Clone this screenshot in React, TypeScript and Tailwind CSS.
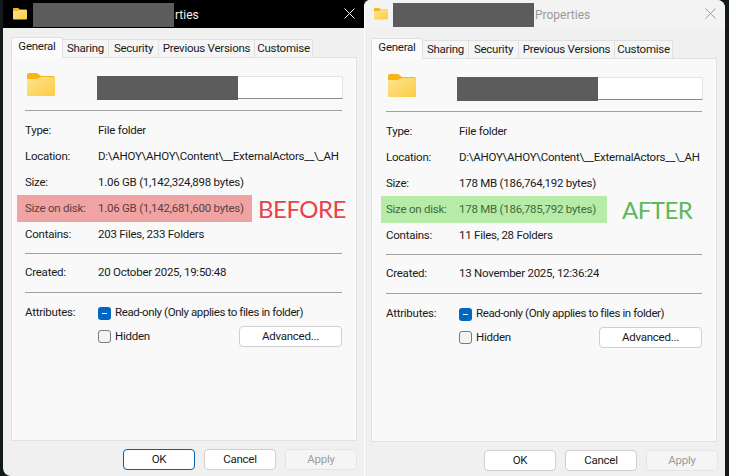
import type { ReactNode } from 'react'

const font = "font-['Roboto',sans-serif]"

function FolderIcon({ size }: { size: number }) {
  const id = `fold${size}`
  return (
    <svg width={size} height={size * 0.83} viewBox="0 0 28 23" className="shrink-0">
      <defs>
        <linearGradient id={id} x1="0" y1="0" x2="1" y2="1">
          <stop offset="0" stopColor="#fde58f" />
          <stop offset="1" stopColor="#fccb45" />
        </linearGradient>
      </defs>
      <path d="M0 2a2 2 0 0 1 2-2h8l4 3h12a2 2 0 0 1 2 2v2H0z" fill="#f7b519" />
      <path d="M0 6l10 0 4-2h12a2 2 0 0 1 2 2v15.500a1.500 1.500 0 0 1-1.500 1.500h-25A1.500 1.500 0 0 1 0 21.500z" fill={`url(#${id})`} />
    </svg>
  )
}

function Row({ label, children }: { label: string; children: ReactNode }) {
  return (
    <div className="flex h-[26px] items-center pt-[2px] text-[#1a1a1a]">
      <span className="w-[73px] shrink-0">{label}</span>
      <span className="min-w-0 overflow-hidden whitespace-nowrap">{children}</span>
    </div>
  )
}

function Divider() {
  return <div className="mr-px h-px bg-[#a0a0a0]" />
}

function Btn({ label, kind }: { label: string; kind?: 'primary' | 'disabled' }) {
  const look =
    kind === 'primary'
      ? 'border border-[#005fb8] bg-white text-[#1a1a1a]'
      : kind === 'disabled'
        ? 'border border-[#e5e5e5] bg-[#f5f5f5] text-[#9c9c9c]'
        : 'border border-[#cfcfcf] bg-white text-[#1a1a1a]'
  return <div className={`flex h-[21px] w-[72px] items-center justify-center rounded-[4px] ${look}`}>{label}</div>
}

function Tab({ w, children }: { w: string; children: ReactNode }) {
  return (
    <div className={`flex h-[18px] items-center justify-center whitespace-nowrap border border-b-0 border-l-0 border-[#e0e0e0] bg-[#f5f5f5] text-[#1a1a1a] ${w}`}>
      {children}
    </div>
  )
}

type WinProps = {
  dark?: boolean
  className: string
  size: string
  disk: string
  contains: string
  created: string
  highlight: string
  tone: string
  tag: string
  tagColor: string
  tagLeft: string
  redactLeft: string
  titleText: string
  titleLeft: string
  titlePad: string
  closeRight: string
  bodyTop: string
  panelLeft: string
  panelPad: string
  nameShift: string
  footerPad: string
  primaryOk?: boolean
}

function PropsWindow(p: WinProps) {
  return (
    <div className={`relative flex h-[476px] flex-col overflow-hidden bg-[#f0f0f0] text-[11.5px] tracking-[-0.25px] ${p.className}`}>
      {/* Title bar */}
      <div className={`relative flex h-[28px] shrink-0 items-center ${p.titlePad} ${p.dark ? 'bg-black text-[#f2f2f2]' : 'bg-[#f3f3f3] text-[#9a9a9a]'}`}>
        <FolderIcon size={14} />
        <span className={`absolute top-[6px] ${p.titleLeft} text-[12px] tracking-normal`}>{p.titleText}</span>
        <div className={`absolute top-[3px] ${p.redactLeft} h-[24px] w-[141px] bg-[#5c5c5c]`} />
        <svg width="11" height="11" viewBox="0 0 11 11" className={`absolute ${p.closeRight} top-[8px]`} stroke="currentColor" strokeWidth="1">
          <path d="M0.500 0.500l10 10M10.500 0.500l-10 10" />
        </svg>
      </div>

      {/* Tabs */}
      <div className={`flex items-end ${p.bodyTop} ${p.panelLeft}`}>
        <div className="z-10 -mb-px flex h-[21px] w-[52px] items-center justify-center rounded-t-[2px] border border-b-0 border-[#e0e0e0] bg-[#fbfbfb] pb-[2px] text-[#1a1a1a]">General</div>
        <Tab w="w-[46px]">Sharing</Tab>
        <Tab w="w-[50px]">Security</Tab>
        <Tab w="w-[96px]">Previous Versions</Tab>
        <Tab w="w-[58px]">Customise</Tab>
      </div>

      {/* Panel */}
      <div className={`flex h-[384px] w-[346px] shrink-0 flex-col border border-[#e2e2e2] bg-[#f9f9f9] pr-[13px] pt-[15px] ${p.panelLeft} ${p.panelPad}`}>
        <div className="flex h-[26px] items-start">
          <div className="ml-[2px] w-[70px]">
            <FolderIcon size={28} />
          </div>
          <div className={`relative mt-[3px] h-[23px] flex-1 border-b border-r border-t border-[#e3e3e3] border-b-[#8a8a8a] bg-white ${p.nameShift}`}>
            <div className="absolute -top-px left-0 h-[24px] w-[141px] bg-[#5c5c5c]" />
          </div>
        </div>
        <div className="mt-[11px]">
          <Divider />
        </div>
        <div className="mt-[6px]">
          <Row label="Type:">File folder</Row>
          <Row label="Location:">D:\AHOY\AHOY\Content\__ExternalActors__\_AH</Row>
          <Row label="Size:">{p.size}</Row>
          <div className={`relative -mb-px flex h-[27px] items-center pt-[1px] ${p.highlight} ${p.tone}`}>
            <span className="w-[73px] shrink-0">Size on disk:</span>
            <span className="whitespace-nowrap">{p.disk}</span>
            <span className={`absolute ${p.tagLeft} top-0 font-['Lato',sans-serif] text-[24px] leading-[27px] tracking-[-0.5px] ${p.tagColor}`}>{p.tag}</span>
          </div>
          <Row label="Contains:">{p.contains}</Row>
        </div>
        <div className="mt-[6px]">
          <Divider />
        </div>
        <div className="mt-[5px]">
          <Row label="Created:">{p.created}</Row>
        </div>
        <div className="mt-[7px]">
          <Divider />
        </div>
        <div className="mt-[11px] flex items-start text-[#1a1a1a]">
          <span className="w-[73px] shrink-0">Attributes:</span>
          <div className="flex-1">
            <div className="flex h-[18px] items-center gap-[4px] whitespace-nowrap tracking-[-0.4px]">
              <span className="flex h-[13px] w-[13px] items-center justify-center rounded-[3px] bg-[#0067c0]">
                <span className="h-px w-[5px] bg-white" />
              </span>
              Read-only (Only applies to files in folder)
            </div>
            <div className="mt-[4px] flex h-[21px] items-center justify-between">
              <div className="flex items-center gap-[4px]">
                <span className="h-[13px] w-[13px] rounded-[3px] border border-[#7a7a7a] bg-[#f3f3f3]" />
                Hidden
              </div>
              <div className="mr-px flex h-[21px] w-[103px] items-center justify-center rounded-[4px] border border-[#cfcfcf] bg-white">Advanced...</div>
            </div>
          </div>
        </div>
      </div>

      {/* Footer */}
      <div className={`mt-[8px] flex gap-[9px] ${p.footerPad}`}>
        <Btn label="OK" kind={p.primaryOk ? 'primary' : undefined} />
        <Btn label="Cancel" />
        <Btn label="Apply" kind="disabled" />
      </div>
    </div>
  )
}

export default function App() {
  return (
    <div className={`flex h-[476px] w-[729px] overflow-hidden bg-[#14191c] ${font}`}>
      <PropsWindow
        dark
        primaryOk
        className="ml-[3px] w-[361px] rounded-bl-[8px]"
        size="1.06 GB (1,142,324,898 bytes)"
        disk="1.06 GB (1,142,681,600 bytes)"
        contains="203 Files, 233 Folders"
        created="20 October 2025, 19:50:48"
        highlight="-ml-[8px] pl-[8px] w-[235px] bg-[#efa3a3]"
        tone="text-[#5e3f3f]"
        tag="BEFORE"
        tagColor="text-[#ea4149]"
        tagLeft="left-[241px]"
        redactLeft="left-[30px]"
        titleText="rties"
        titleLeft="left-[172px]"
        titlePad="pl-[10px]"
        closeRight="right-[9px]"
        bodyTop="mt-[9px]"
        panelLeft="ml-[8px]"
        panelPad="pl-[13px]"
        nameShift=""
        footerPad="pl-[120px]"
      />
      <PropsWindow
        className="w-[361px] rounded-tl-[6px] rounded-tr-[8px] border-l border-l-white"
        size="178 MB (186,764,192 bytes)"
        disk="178 MB (186,785,792 bytes)"
        contains="11 Files, 28 Folders"
        created="13 November 2025, 12:36:24"
        highlight="-ml-[5px] pl-[5px] w-[226px] bg-[#b6eba8]"
        tone="text-[#3f6b3c]"
        tag="AFTER"
        tagColor="text-[#5cb85c]"
        tagLeft="left-[241px]"
        redactLeft="left-[28px]"
        titleText="Properties"
        titleLeft="left-[170px]"
        titlePad="pl-[9px]"
        closeRight="right-[9px]"
        bodyTop="mt-[10px]"
        panelLeft="ml-[6px]"
        panelPad="pl-[14px]"
        nameShift="-ml-px"
        footerPad="pl-[119px]"
      />
    </div>
  )
}
